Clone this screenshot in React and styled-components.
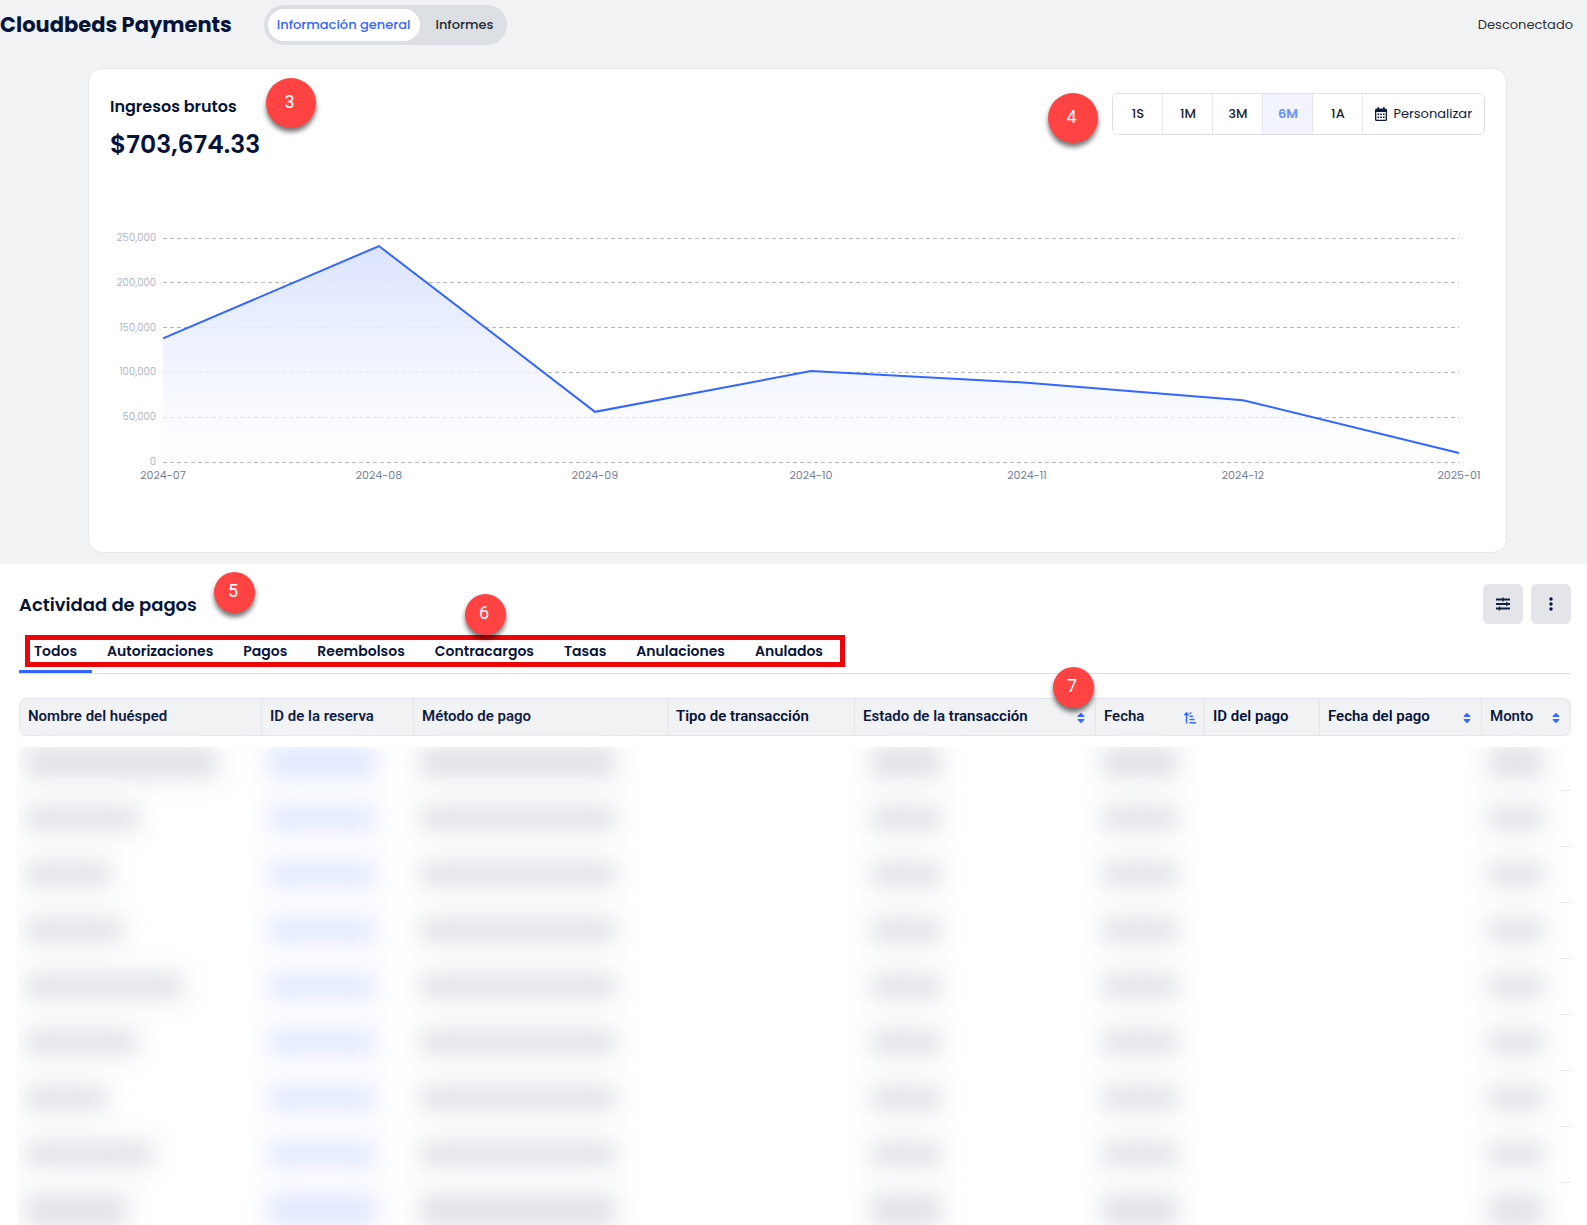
import React, { useState } from "react";
import styled, { createGlobalStyle } from "styled-components";

const RANGES = ["1S", "1M", "3M", "6M", "1A"];

const TABS = [
  "Todos",
  "Autorizaciones",
  "Pagos",
  "Reembolsos",
  "Contracargos",
  "Tasas",
  "Anulaciones",
  "Anulados",
];

const COLUMNS = [
  { label: "Nombre del huésped", width: 243 },
  { label: "ID de la reserva", width: 152 },
  { label: "Método de pago", width: 254 },
  { label: "Tipo de transacción", width: 187 },
  { label: "Estado de la transacción", width: 241, sort: "both" },
  { label: "Fecha", width: 109, sort: "asc" },
  { label: "ID del pago", width: 115 },
  { label: "Fecha del pago", width: 162, sort: "both" },
  { label: "Monto", width: 89, sort: "both" },
];

// widths of the hidden guest names
const ROWS = [188, 110, 82, 94, 154, 108, 78, 124, 98];

const REVENUE = [
  { month: "2024-07", value: 138000 },
  { month: "2024-08", value: 241000 },
  { month: "2024-09", value: 56000 },
  { month: "2024-10", value: 101500 },
  { month: "2024-11", value: 88500 },
  { month: "2024-12", value: 69000 },
  { month: "2025-01", value: 10000 },
];

const TICKS = [250000, 200000, 150000, 100000, 50000, 0];

const CHART = { left: 53, top: 18, width: 1296, height: 224, max: 250000 };

function RevenueChart() {
  const toX = (i) => CHART.left + (CHART.width / (REVENUE.length - 1)) * i;
  const toY = (v) => CHART.top + CHART.height * (1 - v / CHART.max);
  const line = REVENUE.map((d, i) => `${toX(i)},${toY(d.value)}`).join(" ");
  const base = toY(0);

  return (
    <StChart viewBox="0 0 1375 262" role="img" aria-label="Ingresos brutos">
      <defs>
        <linearGradient id="area" x1="0" y1="0" x2="0" y2="1">
          <stop offset="0" stopColor="#d9e2ff" stopOpacity="0.95" />
          <stop offset="0.6" stopColor="#f1f4ff" stopOpacity="0.8" />
          <stop offset="1" stopColor="#ffffff" stopOpacity="0.5" />
        </linearGradient>
      </defs>
      {TICKS.map((tick) => (
        <g key={tick}>
          <StGridLine
            x1={CHART.left}
            x2={CHART.left + CHART.width}
            y1={Math.floor(toY(tick)) + 0.5}
            y2={Math.floor(toY(tick)) + 0.5}
          />
          <StTickY x={CHART.left - 7} y={toY(tick) + 3}>
            {tick.toLocaleString("en-US")}
          </StTickY>
        </g>
      ))}
      <polygon
        points={`${toX(0)},${base} ${line} ${toX(REVENUE.length - 1)},${base}`}
        fill="url(#area)"
      />
      <polyline points={line} fill="none" stroke="#3366ff" strokeWidth="2" />
      {REVENUE.map((d, i) => (
        <StTickX key={d.month} x={toX(i)} y={base + 17}>
          {d.month}
        </StTickX>
      ))}
    </StChart>
  );
}

function CalendarIcon() {
  return (
    <svg width="12" height="14" viewBox="0 0 12 14" aria-hidden="true">
      <path
        fill="#0b1a3f"
        fillRule="evenodd"
        d="M2.5 0h1.3v1.6h4.4V0h1.3v1.6h1A1.5 1.5 0 0 1 12 3.1v9.4a1.5 1.5 0 0 1-1.5 1.5h-9A1.5 1.5 0 0 1 0 12.5V3.1a1.5 1.5 0 0 1 1.5-1.5h1zM1.3 5v7.3c0 .3.1.4.4.4h8.6c.3 0 .4-.1.4-.4V5z"
      />
      <path
        fill="#0b1a3f"
        d="M2.5 6.5h1.7v1.5H2.5zM5.200 6.500h1.700v1.500H5.200zM7.900 6.500h1.700v1.500H7.900zM2.500 9.400h1.700v1.500H2.500zM5.200 9.400h1.700v1.500H5.200zM7.900 9.400h1.700v1.500H7.900z"
      />
    </svg>
  );
}

function FilterIcon() {
  return (
    <svg width="14" height="14" viewBox="0 0 14 14" aria-hidden="true">
      <g fill="none" stroke="#14203c">
        <path strokeWidth="1.8" d="M0 2.500h14M0 7h14M0 11.500h14" />
        <path strokeWidth="1.4" d="M7 .5v4M10.700 5v4M3.500 9.500v4" />
      </g>
    </svg>
  );
}

function MoreIcon() {
  return (
    <svg width="4" height="14" viewBox="0 0 4 14" aria-hidden="true">
      <g fill="#06143a">
        <circle cx="2" cy="2" r="1.7" />
        <circle cx="2" cy="7" r="1.7" />
        <circle cx="2" cy="12" r="1.7" />
      </g>
    </svg>
  );
}

function SortIcon({ type }) {
  if (type === "asc") {
    return (
      <svg width="12" height="12" viewBox="0 0 12 12" aria-hidden="true">
        <path
          stroke="#3366ff"
          strokeWidth="1.5"
          fill="none"
          d="M2.500 11.500V1M.4 3.200L2.500 1l2.100 2.200M5.500 1.200h2M5.500 4.300h3.500M5.500 7.500h5M5.500 10.800H12"
        />
      </svg>
    );
  }
  return (
    <svg width="8" height="12" viewBox="0 0 8 12" aria-hidden="true">
      <path
        fill="#3366ff"
        d="M3.500 1.200q.5-.5 1 0l2.800 2.900q.5.900-.5.900H1.200q-1 0-.5-.9zM3.500 10.800q.5.500 1 0l2.800-2.900q.5-.9-.5-.9H1.200q-1 0-.5.900z"
      />
    </svg>
  );
}

function App() {
  const [view, setView] = useState("general");
  const [range, setRange] = useState("6M");
  const [tab, setTab] = useState("Todos");

  return (
    <StPage>
      <GlobalStyle />
      <StOverview>
        <StHeader>
          <StTitle>Cloudbeds Payments</StTitle>
          <StToggle>
            <StToggleBtn
              type="button"
              $active={view === "general"}
              onClick={() => setView("general")}
            >
              Información general
            </StToggleBtn>
            <StToggleBtn
              type="button"
              $active={view === "informes"}
              onClick={() => setView("informes")}
            >
              Informes
            </StToggleBtn>
          </StToggle>
          <StStatus>Desconectado</StStatus>
        </StHeader>

        <StCard>
          <StCardTop>
            <div>
              <StCardTitle>Ingresos brutos</StCardTitle>
              <StAmount>$703,674.33</StAmount>
            </div>
            <StRanges>
              {RANGES.map((item) => (
                <StRangeBtn
                  key={item}
                  type="button"
                  $active={range === item}
                  onClick={() => setRange(item)}
                >
                  {item}
                </StRangeBtn>
              ))}
              <StCustomBtn type="button">
                <CalendarIcon />
                Personalizar
              </StCustomBtn>
            </StRanges>
          </StCardTop>
          <RevenueChart />
          <StBadge $size={50} $top={9} $left={177}>
            3
          </StBadge>
          <StBadge $size={50} $top={24} $right={408}>
            4
          </StBadge>
        </StCard>
      </StOverview>

      <StActivity>
        <StActivityTop>
          <StActivityTitle>Actividad de pagos</StActivityTitle>
          <StActions>
            <StIconBtn type="button" aria-label="Filtros">
              <FilterIcon />
            </StIconBtn>
            <StIconBtn type="button" aria-label="Más opciones">
              <MoreIcon />
            </StIconBtn>
          </StActions>
        </StActivityTop>

        <StTabs>
          {TABS.map((item) => (
            <StTab
              key={item}
              type="button"
              $active={tab === item}
              onClick={() => setTab(item)}
            >
              {item}
            </StTab>
          ))}
          <StTabsFrame />
        </StTabs>

        <StTableWrap>
          <StTable>
            <colgroup>
              {COLUMNS.map((col) => (
                <StCol key={col.label} $width={col.width} />
              ))}
            </colgroup>
            <thead>
              <tr>
                {COLUMNS.map((col) => (
                  <StTh key={col.label} scope="col">
                    <StThInner>
                      {col.label}
                      {col.sort && (
                        <StSortBtn
                          type="button"
                          $wide={col.sort === "both"}
                          aria-label={`Ordenar por ${col.label}`}
                        >
                          <SortIcon type={col.sort} />
                        </StSortBtn>
                      )}
                    </StThInner>
                  </StTh>
                ))}
              </tr>
            </thead>
            <tbody>
              <tr aria-hidden="true">
                <StSpacer colSpan={COLUMNS.length} />
              </tr>
              {ROWS.map((width, i) => (
                <StRow key={i}>
                  <td>
                    <StHidden $width={width} />
                  </td>
                  <td>
                    <StHidden $width={104} $link />
                  </td>
                  <td>
                    <StHidden $width={192} />
                  </td>
                  <td />
                  <td>
                    <StHidden $width={66} $indent={10} />
                  </td>
                  <td>
                    <StHidden $width={72} />
                  </td>
                  <td />
                  <td />
                  <td>
                    <StHidden $width={52} />
                  </td>
                </StRow>
              ))}
            </tbody>
          </StTable>
        </StTableWrap>

        <StBadge $size={41} $top={8} $left={214}>
          5
        </StBadge>
        <StBadge $size={41} $top={30} $left={465}>
          6
        </StBadge>
        <StBadge $size={41} $top={103} $right={493}>
          7
        </StBadge>
      </StActivity>
    </StPage>
  );
}

export default App;

const GlobalStyle = createGlobalStyle`
  * {
    box-sizing: border-box;
  }
  body {
    margin: 0;
    background-color: #fff;
    color: #06143a;
    font-family: Poppins, Lato, "Liberation Sans", sans-serif;
  }
  button {
    font-family: inherit;
    cursor: pointer;
  }
`;

const StPage = styled.div`
  height: 100vh;
  overflow: hidden;
`;

const StOverview = styled.section`
  background-color: #f1f2f4;
  padding-bottom: 11px;
`;

const StHeader = styled.header`
  display: flex;
  align-items: center;
  height: 68px;
  padding: 0 14px 18px 0;
`;

const StTitle = styled.h1`
  margin: 0 32px 0 0;
  font-size: 21px;
  line-height: 32px;
  font-weight: 700;
`;

const StToggle = styled.div`
  display: flex;
  height: 40px;
  padding: 4px;
  border-radius: 20px;
  background-color: #dcdfe4;
`;

const StToggleBtn = styled.button`
  height: 32px;
  padding: ${(props) => (props.$active ? "0 9px" : "0 10px 0 16px")};
  border: 0;
  border-radius: 16px;
  font-size: 13px;
  font-weight: 500;
  color: ${(props) => (props.$active ? "#3366ff" : "#272a33")};
  background-color: ${(props) => (props.$active ? "#fff" : "transparent")};
`;

const StStatus = styled.span`
  margin-left: auto;
  font-size: 13px;
  color: #2c2d33;
`;

const StCard = styled.div`
  position: relative;
  margin: 0 80px 0 88px;
  padding: 24px 21px 70px;
  border: 1px solid #e6e8ea;
  border-radius: 14px;
  background-color: #fff;
`;

const StCardTop = styled.div`
  display: flex;
  justify-content: space-between;
  align-items: flex-start;
  height: 127px;
`;

const StCardTitle = styled.h2`
  margin: 2px 0 0;
  font-size: 16px;
  line-height: 24px;
  font-weight: 600;
`;

const StAmount = styled.p`
  margin: 8px 0 0;
  font-size: 25px;
  line-height: 36px;
  font-weight: 600;
`;

const StRanges = styled.div`
  display: flex;
  height: 42px;
  overflow: hidden;
  border: 1px solid #dcdfe6;
  border-radius: 6px;
`;

const StRangeBtn = styled.button`
  width: 50px;
  padding: 0;
  border: 0;
  border-right: 1px solid #e4e7ee;
  font-size: 13px;
  font-weight: ${(props) => (props.$active ? 600 : 500)};
  color: ${(props) => (props.$active ? "#6b8fff" : "#20242f")};
  background-color: ${(props) => (props.$active ? "#f2f5ff" : "#fff")};
`;

const StCustomBtn = styled.button`
  display: flex;
  align-items: center;
  gap: 6px;
  padding: 0 12px;
  border: 0;
  font-size: 13px;
  color: #0b1a3f;
  background-color: #fff;
`;

const StChart = styled.svg`
  display: block;
  width: 100%;
  height: auto;
`;

const StGridLine = styled.line`
  stroke: #b4b9c4;
  stroke-dasharray: 4 3;
`;

const StTickY = styled.text`
  font-size: 10px;
  fill: #b0b7c3;
  text-anchor: end;
`;

const StTickX = styled.text`
  font-size: 11px;
  fill: #75809b;
  text-anchor: middle;
`;

const StBadge = styled.span`
  position: absolute;
  z-index: 2;
  top: ${(props) => props.$top}px;
  left: ${(props) => (props.$left ? `${props.$left}px` : "auto")};
  right: ${(props) => (props.$right ? `${props.$right}px` : "auto")};
  display: flex;
  align-items: center;
  justify-content: center;
  width: ${(props) => props.$size}px;
  height: ${(props) => props.$size}px;
  padding: 0 3px 4px 0;
  border-radius: 50%;
  font-family: Roboto, sans-serif;
  font-size: 18px;
  color: #fff;
  background-color: #ff4343;
  box-shadow: 0 4px 5px rgba(0, 0, 0, 0.55);
`;

const StActivity = styled.section`
  position: relative;
  padding: 20px 16px 0 19px;
`;

const StActivityTop = styled.div`
  display: flex;
  justify-content: space-between;
  align-items: center;
  height: 40px;
`;

const StActivityTitle = styled.h2`
  margin: 0;
  font-size: 18px;
  font-weight: 600;
`;

const StActions = styled.div`
  display: flex;
  gap: 8px;
`;

const StIconBtn = styled.button`
  display: flex;
  align-items: center;
  justify-content: center;
  width: 40px;
  height: 40px;
  border: 0;
  border-radius: 6px;
  background-color: #e4e5e9;
`;

const StTabs = styled.div`
  position: relative;
  display: flex;
  height: 50px;
  border-bottom: 1px solid #dcdee2;
`;

const StTab = styled.button`
  padding: 8px 15px 0;
  border: 0;
  border-bottom: 3px solid
    ${(props) => (props.$active ? "#3366ff" : "transparent")};
  font-size: 14px;
  font-weight: 600;
  color: #06143a;
  background-color: transparent;
`;

const StTabsFrame = styled.div`
  position: absolute;
  top: 11px;
  left: 6px;
  width: 820px;
  height: 32px;
  border: 5px solid #ea0606;
  pointer-events: none;
`;

const StTableWrap = styled.div`
  margin: 24px 0 0 -2px;
  padding-left: 2px;
  overflow: hidden;
`;

const StTable = styled.table`
  width: 100%;
  table-layout: fixed;
  border-collapse: separate;
  border-spacing: 0;
`;

const StCol = styled.col`
  width: ${(props) => props.$width}px;
`;

const StTh = styled.th`
  height: 38px;
  padding: 0 0 2px 8px;
  border: 1px solid #e1e3e6;
  border-left-width: 0;
  background-color: #f1f2f4;
  font-family: Roboto, sans-serif;
  font-size: 15px;
  font-weight: 600;
  text-align: left;
  white-space: nowrap;
  &:first-child {
    border-left-width: 1px;
    border-radius: 8px 0 0 8px;
  }
  &:last-child {
    border-radius: 0 8px 8px 0;
  }
`;

const StThInner = styled.div`
  display: flex;
  align-items: center;
  justify-content: space-between;
`;

const StSortBtn = styled.button`
  display: flex;
  padding: 4px ${(props) => (props.$wide ? "10px" : "8px")} 0 0;
  border: 0;
  background-color: transparent;
`;

// covers the blur that spreads above the first row
const StSpacer = styled.td`
  position: relative;
  z-index: 1;
  height: 11px;
  padding: 0;
  background-color: #fff;
`;

const StHidden = styled.div`
  width: ${(props) => props.$width}px;
  height: 22px;
  margin-left: ${(props) => props.$indent || 0}px;
  background-color: ${(props) => (props.$link ? "#e2e9ff" : "#e2e3e8")};
  box-shadow: 0 0 20px 8px
    ${(props) => (props.$link ? "#f6f8ff" : "#f6f7f8")};
  filter: blur(10px);
`;

const StRow = styled.tr`
  height: 56px;
  td {
    padding: 0 0 2px 8px;
  }
  td:last-child {
    background: linear-gradient(#e9eaec, #e9eaec) right bottom / 12px 1px
      no-repeat;
  }
  &:nth-child(2) {
    height: 44px;
  }
  &:nth-child(2) td {
    padding-bottom: 14px;
  }
  &:nth-child(2) ${StHidden}, &:last-child ${StHidden} {
    height: 30px;
  }
`;
